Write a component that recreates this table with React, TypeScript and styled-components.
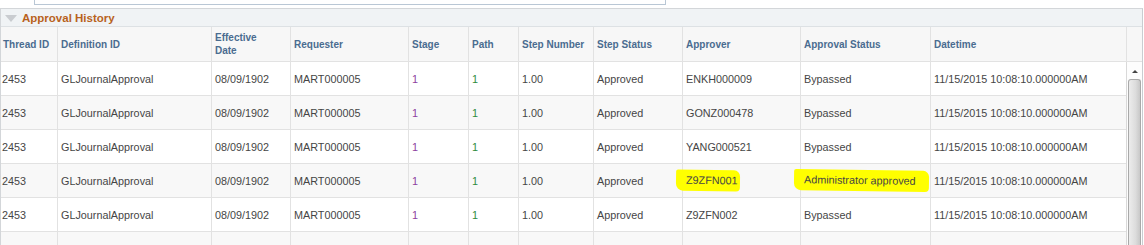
import styled, { createGlobalStyle } from "styled-components";

const GlobalStyle = createGlobalStyle`
  html, body {
    margin: 0;
    padding: 0;
    background: #ffffff;
  }
  body {
    font-family: "Liberation Sans", Arial, sans-serif;
  }
`;

const cols = "56px 154px 79px 118px 60px 50px 75px 89px 118px 130px 196px";

interface IRow {
  thread: string;
  definition: string;
  effDate: string;
  requester: string;
  stage: string;
  path: string;
  step: string;
  stepStatus: string;
  approver: string;
  approvalStatus: string;
  datetime: string;
  marked?: boolean;
}

const rows: IRow[] = [
  ["ENKH000009", "Bypassed"],
  ["GONZ000478", "Bypassed"],
  ["YANG000521", "Bypassed"],
  ["Z9ZFN001", "Administrator approved", true],
  ["Z9ZFN002", "Bypassed"],
  ["Z9ZFN003", "Bypassed"],
].map(([approver, status, marked]) => ({
  thread: "2453",
  definition: "GLJournalApproval",
  effDate: "08/09/1902",
  requester: "MART000005",
  stage: "1",
  path: "1",
  step: "1.00",
  stepStatus: "Approved",
  approver: approver as string,
  approvalStatus: status as string,
  datetime: "11/15/2015 10:08:10.000000AM",
  marked: !!marked,
}));

const Page = styled.div`
  width: 1144px;
  height: 245px;
  overflow: hidden;
`;

const SearchBox = styled.div`
  margin-left: 34px;
  width: 630px;
  height: 4px;
  border: 1px solid #b9c7d5;
  border-top: none;
  background: #ffffff;
`;

const Group = styled.div`
  margin-top: 3px;
  width: 1141px;
  border: 1px solid #d3d6d9;
  border-right-color: #c9cdd1;
`;

const GroupHeader = styled.div`
  height: 17px;
  display: flex;
  align-items: center;
  gap: 5px;
  padding-left: 4px;
  background: #f0f3f5;
  border-bottom: 1px solid #dde1e4;
`;

const Caret = styled.span`
  width: 0;
  height: 0;
  border-left: 6px solid transparent;
  border-right: 6px solid transparent;
  border-top: 7px solid #c9ccd0;
  margin-top: 1px;
`;

const Title = styled.span`
  font-size: 11.5px;
  font-weight: bold;
  color: #b8621d;
`;

const HeadRow = styled.div`
  display: grid;
  grid-template-columns: ${cols} 1fr;
  height: 34px;
  background: #f7f7f7;
  border-bottom: 1px solid #e2e2e2;
`;

const HeadCell = styled.div`
  display: flex;
  align-items: center;
  padding-left: 3px;
  font-size: 10px;
  font-weight: bold;
  line-height: 13px;
  white-space: pre-line;
  color: #4a6c90;
  border-left: 1px solid #e2e2e2;
  &:first-child {
    border-left: none;
    padding-left: 2px;
  }
`;

const Body = styled.div`
  display: flex;
  height: 190px;
  overflow: hidden;
`;

const Rows = styled.div`
  flex: 1;
`;

const Row = styled.div<{ $alt: boolean }>`
  display: grid;
  grid-template-columns: ${cols};
  height: 33px;
  background: ${(p) => (p.$alt ? "#f8f8f8" : "#ffffff")};
  border-bottom: 1px solid #e2e2e2;
`;

const Cell = styled.div<{ $tone?: "stage" | "path" }>`
  display: flex;
  align-items: center;
  padding-left: 3px;
  font-size: 10.8px;
  white-space: nowrap;
  color: ${(p) =>
    p.$tone === "stage" ? "#8d3fa0" : p.$tone === "path" ? "#2e8a3c" : "#454545"};
  border-left: 1px solid #e2e2e2;
  &:first-child {
    border-left: none;
    padding-left: 1px;
  }
`;

// felt-pen style highlight over a value
const Marker = styled.span<{ $tail: number }>`
  background: #ffff00;
  margin-left: -10px;
  padding: 4px ${(p) => p.$tail}px 5px 10px;
  border-radius: 2px 6px 4px 7px;
  transform: rotate(0.8deg);
`;

const ScrollTrack = styled.div`
  width: 15px;
  border-left: 1px solid #d9d9d9;
  background: #fdfdfd;
  display: flex;
  flex-direction: column;
  align-items: center;
`;

const UpArrow = styled.span`
  margin-top: 8px;
  width: 0;
  height: 0;
  border-left: 3px solid transparent;
  border-right: 3px solid transparent;
  border-bottom: 3px solid #444;
`;

const Thumb = styled.div`
  margin-top: 6px;
  width: 13px;
  flex: 1;
  border: 1px solid #a9a9a9;
  border-bottom: none;
  border-radius: 3px 3px 0 0;
  background: linear-gradient(to right, #ececec, #dcdcdc 60%, #c8c8c8);
  box-sizing: border-box;
`;

const headers = [
  "Thread ID",
  "Definition ID",
  "Effective\nDate",
  "Requester",
  "Stage",
  "Path",
  "Step Number",
  "Step Status",
  "Approver",
  "Approval Status",
  "Datetime",
  "",
];

export default function App() {
  return (
    <>
      <GlobalStyle />
      <Page>
        <SearchBox />
        <Group>
          <GroupHeader>
            <Caret />
            <Title>Approval History</Title>
          </GroupHeader>
          <HeadRow>
            {headers.map((h, i) => (
              <HeadCell key={i}>{h}</HeadCell>
            ))}
          </HeadRow>
          <Body>
            <Rows>
              {rows.map((r, i) => (
                <Row key={i} $alt={i % 2 === 1}>
                  <Cell>{r.thread}</Cell>
                  <Cell>{r.definition}</Cell>
                  <Cell>{r.effDate}</Cell>
                  <Cell>{r.requester}</Cell>
                  <Cell $tone="stage">{r.stage}</Cell>
                  <Cell $tone="path">{r.path}</Cell>
                  <Cell>{r.step}</Cell>
                  <Cell>{r.stepStatus}</Cell>
                  <Cell>
                    {r.marked ? <Marker $tail={2}>{r.approver}</Marker> : r.approver}
                  </Cell>
                  <Cell>
                    {r.marked ? (
                      <Marker $tail={13}>{r.approvalStatus}</Marker>
                    ) : (
                      r.approvalStatus
                    )}
                  </Cell>
                  <Cell>{r.datetime}</Cell>
                </Row>
              ))}
            </Rows>
            <ScrollTrack>
              <UpArrow />
              <Thumb />
            </ScrollTrack>
          </Body>
        </Group>
      </Page>
    </>
  );
}
